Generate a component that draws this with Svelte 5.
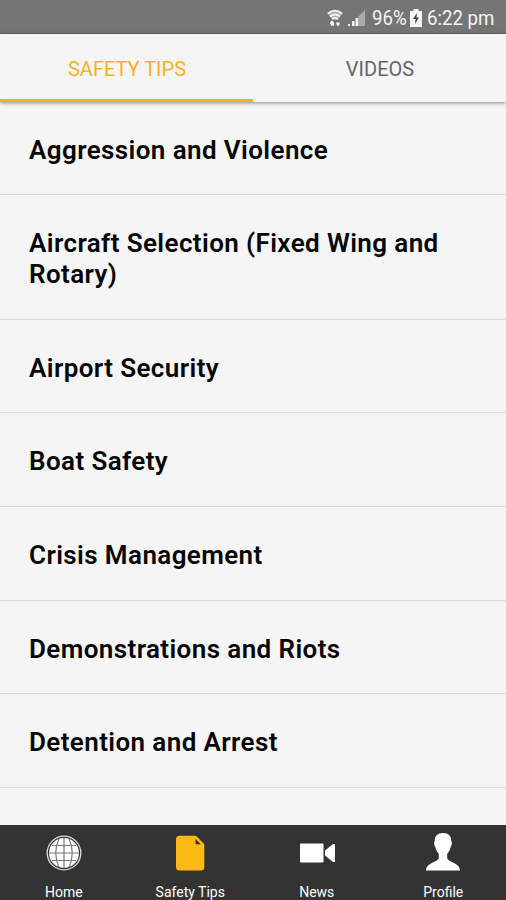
<script>
	let activeTab = $state('Safety Tips');
	let activePage = $state('Safety Tips');

	const tabs = ['Safety Tips', 'Videos'];
	const tips = [
		'Aggression and Violence',
		'Aircraft Selection (Fixed Wing and Rotary)',
		'Airport Security',
		'Boat Safety',
		'Crisis Management',
		'Demonstrations and Riots',
		'Detention and Arrest',
		'Disease Planning and Control'
	];
	const pages = ['Home', 'Safety Tips', 'News', 'Profile'];
</script>

<div class="app">
	<header class="status">
		<svg class="wifi" viewBox="0 0 16 18">
			<path class="weak" d="M1 4.500Q8-1 15 4.500L10.500 11h-5z" />
			<path class="arc" d="M.8 4.800Q8-1.500 15.200 4.800M3 7.500Q8 3.500 13 7.500M5 10Q8 7.800 11 10" />
			<path d="M3 13.500l2-2 2 2v3.200H4zM9 13.500h4l-1 3.200h-2z" />
		</svg>
		<svg class="signal" viewBox="0 0 18 18">
			<path class="weak" d="M10 8l7-7v16h-7z" />
			<path d="M0 15h2v2H0zM4 12h2.500v5H4zM7.500 9h2.500v8H7.500z" />
		</svg>
		<span class="percent">96%</span>
		<svg class="battery" viewBox="0 0 12 18">
			<path d="M3.500 0h5v2H12v16H0V2h3.500z" />
			<path class="bolt" d="M7 4L3 10h2.500L5 15l4-6.500H6.500z" />
		</svg>
		<span class="time">6:22 pm</span>
	</header>

	<nav class="tabs">
		{#each tabs as tab}
			<button class="tab" class:active={activeTab === tab} onclick={() => (activeTab = tab)}>{tab}</button>
		{/each}
	</nav>

	<ul class="list">
		{#each tips as tip}
			<li class="tip">{tip}</li>
		{/each}
	</ul>

	<nav class="bottom">
		{#each pages as page}
			<button class="page" onclick={() => (activePage = page)}>
				<svg class="icon" class:selected={activePage === page} viewBox="0 0 40 40">
					{#if page === 'Home'}
						<circle cx="20" cy="20" r="16.8" class="ring" />
						<circle cx="20" cy="20" r="15" />
						<path class="grid" d="M20 5v30M5 20h30M8 12.500h24M8 27.500h24M15 5.500Q8.500 20 15 34.500M25 5.500Q31.500 20 25 34.500" />
					{:else if page === 'Safety Tips'}
						<path d="M9.500 2.700h16.500l8.300 8.500v22.800a3.500 3.500 0 0 1-3.500 3.500H9.500A3.500 3.500 0 0 1 6 34V6.200a3.500 3.500 0 0 1 3.500-3.500z" />
						<path class="fold" d="M25.500 5.800v5.400h5.400z" />
					{:else if page === 'News'}
						<path d="M4 10.500h21.500a1 1 0 0 1 1 1v17a1 1 0 0 1-1 1H4a1 1 0 0 1-1-1v-17a1 1 0 0 1 1-1zM28 17.500l8-6.500h2v18h-2l-8-6.500z" />
					{:else}
						<path d="M20 0C14.500 0 11.500 3.200 11.700 8.200c-.9.800-.6 4.500.6 5.600.6 3.200 1.700 5 3.500 7.200v3.500c0 5-12.300 4.500-12.800 13h34c-.5-8.500-12.800-8-12.800-13V21c1.800-2.200 2.900-4 3.500-7.200 1.200-1.100 1.500-4.800.6-5.600C28.500 3.200 25.500 0 20 0z" />
					{/if}
				</svg>
				<span>{page}</span>
			</button>
		{/each}
	</nav>
</div>

<style>
	:global(body) {
		margin: 0;
	}

	.app {
		display: flex;
		flex-direction: column;
		height: 900px;
		overflow: hidden;
		background: #f5f5f5;
		font-family: Roboto, sans-serif;
	}

	button {
		border: 0;
		background: none;
		font-family: inherit;
		cursor: pointer;
	}

	.status {
		display: flex;
		align-items: center;
		justify-content: flex-end;
		flex: none;
		height: 34px;
		box-sizing: border-box;
		padding: 3px 10px 0 0;
		border-bottom: 1px solid #626262;
		background: #757575;
		color: #f5f5f5;
		font-size: 20.5px;
	}

	.status svg {
		flex: none;
		height: 18px;
		fill: #f5f5f5;
	}

	.status .weak {
		fill: #aaa;
	}

	.wifi {
		width: 16px;
	}

	.wifi .arc {
		fill: none;
		stroke: #f5f5f5;
		stroke-width: 1.8;
	}

	.signal {
		width: 18px;
		margin-left: 5px;
	}

	.percent,
	.time {
		transform: scaleX(0.91);
		transform-origin: left;
		white-space: nowrap;
	}

	.percent {
		width: 35px;
		margin-left: 6px;
	}

	.battery {
		width: 12px;
		margin-left: 3px;
	}

	.battery .bolt {
		fill: #444;
	}

	.time {
		width: 69px;
		margin-left: 5px;
	}

	.tabs {
		position: relative;
		display: flex;
		flex: none;
		height: 68px;
		background: #f5f5f5;
		box-shadow: 0 1px 4px rgba(0, 0, 0, 0.45);
	}

	.tab {
		flex: 1;
		padding: 4px 0 0 1px;
		border-bottom: 3px solid transparent;
		color: #666;
		font-size: 20px;
		text-transform: uppercase;
	}

	.tab.active {
		border-color: #f6ae2d;
		color: #fbb01c;
	}

	.list {
		flex: 1;
		min-height: 0;
		overflow: hidden;
		margin: 0;
		padding: 0;
		list-style: none;
	}

	.tip {
		padding: 33px 50px 28.4px 29px;
		border-bottom: 1px solid #d9d9d9;
		color: #050505;
		font-size: 26px;
		font-weight: 600;
		letter-spacing: 0.4px;
		line-height: 31.2px;
	}

	.tip:first-child {
		padding-top: 32.500px;
	}

	.bottom {
		display: flex;
		flex: none;
		height: 75px;
		background: #333;
	}

	.page {
		display: flex;
		flex: 1;
		flex-direction: column;
		align-items: center;
		padding: 8px 0 0 1px;
		color: #fff;
		font-size: 14px;
	}

	.icon {
		flex: none;
		width: 40px;
		height: 40px;
		margin-bottom: 11px;
		fill: #fff;
	}

	.icon.selected {
		fill: #fdb913;
	}

	.ring {
		fill: none;
		stroke: #ddd;
		stroke-width: 1.3;
	}

	.grid {
		fill: none;
		stroke: #777;
		stroke-width: 1.2;
	}

	.fold {
		fill: #333;
	}
</style>
